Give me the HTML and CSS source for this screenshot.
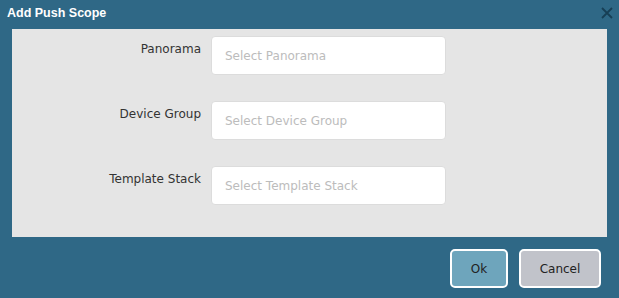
FILE: index.html
```html
<!DOCTYPE html>
<html lang="en">

<head>
    <meta charset="UTF-8">
    <meta name="viewport" content="width=device-width, initial-scale=1.0">
    <title>Add Push Scope</title>
    <link rel="stylesheet" href="styles.css">
</head>

<body>

    <div class="dialog">
        <div class="dialog-header">
            <span class="dialog-title">Add Push Scope</span>
            <svg class="dialog-close" width="12" height="12" viewBox="0 0 12 12">
                <path d="M1 1 L11 11 M11 1 L1 11" stroke="#173f55" stroke-width="1.8" fill="none" />
            </svg>
        </div>

        <div class="dialog-body">
            <div class="form-row">
                <label for="panorama">Panorama</label>
                <input id="panorama" type="text" placeholder="Select Panorama">
            </div>
            <div class="form-row">
                <label for="deviceGroup">Device Group</label>
                <input id="deviceGroup" type="text" placeholder="Select Device Group">
            </div>
            <div class="form-row">
                <label for="templateStack">Template Stack</label>
                <input id="templateStack" type="text" placeholder="Select Template Stack">
            </div>
        </div>

        <!-- Botones -->
        <div class="dialog-footer">
            <button class="btn btn-ok">Ok</button>
            <button class="btn btn-cancel">Cancel</button>
        </div>
    </div>

</body>

</html>
```

FILE: styles.css
```css
body {
    margin: 0;
    background-color: #2f6886;
    font-family: "DejaVu Sans", Verdana, sans-serif;
}

.dialog {
    width: 619px;
    height: 298px;
}

.dialog-header {
    display: flex;
    align-items: center;
    justify-content: space-between;
    height: 29px;
    padding: 0 6px 0 7px;
    box-sizing: border-box;
}

.dialog-title {
    color: #fff;
    font-family: "Liberation Sans", Arial, sans-serif;
    font-size: 12.5px;
    font-weight: bold;
    margin-top: -3px;
}

.dialog-close {
    margin-top: -3px;
}

.dialog-body {
    margin: 0 12px;
    width: 595px;
    height: 208px;
    padding-top: 7px;
    box-sizing: border-box;
    background-color: #e5e5e5;
}

.form-row {
    display: flex;
    margin-bottom: 26px;
}

.form-row label {
    width: 199px;
    padding-right: 10px;
    padding-top: 6px;
    text-align: right;
    box-sizing: border-box;
    font-size: 12px;
    color: #333;
}

.form-row input {
    width: 235px;
    height: 39px;
    padding: 0 13px;
    box-sizing: border-box;
    border: 1px solid #dcdcdc;
    border-radius: 4px;
    background-color: #fff;
    font-family: inherit;
    font-size: 12px;
    outline: none;
}

.form-row input::placeholder {
    color: #bcbcbc;
}

.dialog-footer {
    display: flex;
    justify-content: flex-end;
    gap: 11px;
    padding: 12px 18px 0 0;
}

.btn {
    height: 39px;
    border: 2px solid #fff;
    border-radius: 5px;
    font-family: inherit;
    font-size: 12px;
    color: #222;
    cursor: pointer;
}

.btn-ok {
    width: 58px;
    background-color: #6ea5bc;
}

.btn-cancel {
    width: 82px;
    background-color: #c1c3ca;
}
```
